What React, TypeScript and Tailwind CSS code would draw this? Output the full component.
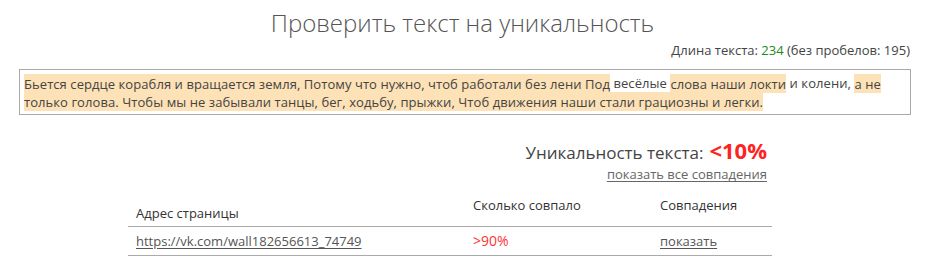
import React from "react";

const hl = "bg-[#fde1b7] py-[0.5px]";

export default function App() {
  return (
    <div className="w-[925px] h-[269px] bg-white text-[#555] font-['Open_Sans',sans-serif] overflow-hidden">
      <h1 className="pt-[6px] text-center text-[24px] leading-[33px] font-light text-[#555]">
        Проверить текст на уникальность
      </h1>

      <div className="mt-[3px] pr-[15px] text-right text-[13px] leading-[17px] text-[#444]">
        Длина текста: <span className="text-[#1a8a1a]">234</span> (без пробелов: 195)
      </div>

      <div className="ml-[19px] mr-[14px] mt-[10px] border border-[#aaa] px-[4px] pt-[4px] pb-[4px] text-[13px] leading-[18px] tracking-[0.07px] text-[#444]">
        <span className={hl}>
          Бьется сердце корабля и вращается земля, Потому что нужно, чтоб работали без лени Под
        </span>{" "}
        весёлые{" "}
        <span className={hl}>слова наши локти</span> и колени,{" "}
        <span className={hl}>
          а не только голова. Чтобы мы не забывали танцы, бег, ходьбу, прыжки, Чтоб движения наши стали грациозны и легки.
        </span>
      </div>

      <div className="ml-[128px] w-[644px] mt-[22px]">
        <div className="flex flex-col items-end pr-[5px]">
          <div className="flex items-baseline gap-[6px] leading-[26px]">
            <span className="text-[17px] text-[#444]">Уникальность текста:</span>
            <span className="text-[22px] font-bold text-[#f22]">&lt;10%</span>
          </div>
          <a href="#" className="text-[13px] leading-[16px] text-[#666] underline underline-offset-2">
            показать все совпадения
          </a>
        </div>

        <table className="mt-[12px] w-full border-collapse text-[13px] text-[#333]">
          <thead>
            <tr className="border-b border-[#aaa]">
              <th className="w-[337px] px-[8px] pb-[4px] pt-[10px] text-left align-bottom font-normal leading-[18px]">
                Адрес страницы
              </th>
              <th className="w-[187px] px-[8px] pb-[12px] pt-[2px] text-left align-top font-normal leading-[18px]">
                Сколько совпало
              </th>
              <th className="px-[8px] pb-[12px] pt-[2px] text-left align-top font-normal leading-[18px]">
                Совпадения
              </th>
            </tr>
          </thead>
          <tbody>
            <tr className="border-b border-[#aaa]">
              <td className="px-[8px] py-[5px] leading-[18px]">
                <a href="#" className="text-[#555] underline underline-offset-2">
                  https://vk.com/wall182656613_74749
                </a>
              </td>
              <td className="px-[8px] py-[5px] leading-[18px] text-[#f33] text-[14px]">&gt;90%</td>
              <td className="px-[8px] py-[5px] leading-[18px]">
                <a href="#" className="text-[#555] underline underline-offset-2">
                  показать
                </a>
              </td>
            </tr>
          </tbody>
        </table>
      </div>
    </div>
  );
}
